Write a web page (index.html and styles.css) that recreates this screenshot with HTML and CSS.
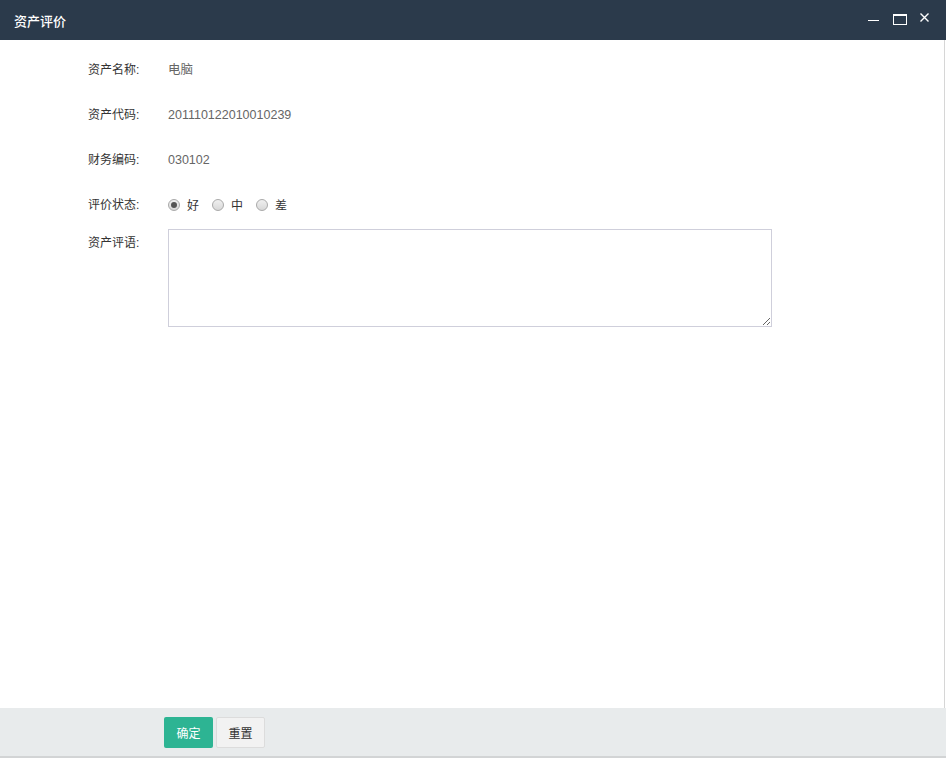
FILE: index.html
```html
<!DOCTYPE html>
<html lang="zh-CN">
<head>
    <meta charset="UTF-8">
    <title>资产评价</title>
    <link rel="stylesheet" href="styles.css">
</head>
<body>
    <div class="dialog">
        <div class="dialog-title">
            <span class="title-text">资产评价</span>
            <div class="title-tools">
                <span class="tool tool-min"></span>
                <span class="tool tool-max"></span>
                <span class="tool tool-close">
                    <svg width="9" height="9" viewBox="0 0 9 9"><path d="M0.5 0.5 L8.5 8.5 M8.5 0.5 L0.5 8.5" stroke="#fff" stroke-width="1.4" fill="none"/></svg>
                </span>
            </div>
        </div>

        <div class="dialog-body">
            <div class="form">
                <div class="row">
                    <span class="label">资产名称:</span>
                    <span class="value">电脑</span>
                </div>
                <div class="row">
                    <span class="label">资产代码:</span>
                    <span class="value">201110122010010239</span>
                </div>
                <div class="row">
                    <span class="label">财务编码:</span>
                    <span class="value">030102</span>
                </div>
                <div class="row">
                    <span class="label">评价状态:</span>
                    <div class="radios">
                        <label class="radio"><input type="radio" name="state" checked> 好</label>
                        <label class="radio"><input type="radio" name="state"> 中</label>
                        <label class="radio"><input type="radio" name="state"> 差</label>
                    </div>
                </div>
                <div class="row row-top">
                    <span class="label">资产评语:</span>
                    <textarea class="remark"></textarea>
                </div>
            </div>
        </div>

        <div class="dialog-footer">
            <button class="btn btn-ok">确定</button>
            <button class="btn btn-reset">重置</button>
        </div>
    </div>
</body>
</html>
```

FILE: styles.css
```css
* {
    box-sizing: border-box;
}

body {
    margin: 0;
    padding: 0;
    font-family: "Liberation Sans", "Noto Sans CJK SC", sans-serif;
    font-size: 12px;
    background-color: #ffffff;
}

.dialog {
    width: 946px;
    height: 758px;
    display: flex;
    flex-direction: column;
}

/* 标题栏 */
.dialog-title {
    height: 40px;
    background-color: #2b3a4b;
    display: flex;
    align-items: center;
    justify-content: space-between;
    padding: 0 17px 0 14px;
}

.title-text {
    color: #ffffff;
    font-size: 13px;
    font-weight: 500;
}

.title-tools {
    display: flex;
    align-items: flex-start;
    align-self: flex-start;
    padding-top: 13px;
}

.tool {
    display: block;
    height: 9px;
    position: relative;
}

.tool-min {
    width: 11px;
    margin-right: 14px;
}

.tool-min::after {
    content: "";
    position: absolute;
    left: 0;
    right: 0;
    top: 7px;
    height: 1px;
    background-color: #ffffff;
}

.tool-max {
    width: 12px;
    margin-right: 15px;
}

.tool-max::after {
    content: "";
    position: absolute;
    left: 0;
    top: 1px;
    width: 12px;
    height: 8px;
    border: 1px solid #ffffff;
    border-top-width: 2px;
}

.tool-close {
    width: 9px;
}

.tool-close svg {
    display: block;
}

/* 内容 */
.dialog-body {
    flex: 1;
    border-right: 1px solid #d6d6d6;
    margin-right: 1px;
}

.form {
    padding-top: 7px;
    padding-left: 88px;
}

.row {
    display: flex;
    align-items: center;
    height: 45px;
}

.row-top {
    align-items: flex-start;
    height: auto;
    margin-top: 2px;
}

.label {
    width: 80px;
    color: #333333;
    line-height: 20px;
}

.row-top .label {
    padding-top: 4px;
}

.value {
    color: #666666;
    font-size: 12.5px;
    line-height: 20px;
}

.radios {
    display: flex;
    align-items: center;
}

.radio {
    display: flex;
    align-items: center;
    color: #333333;
    margin-right: 13px;
}

.radio input {
    appearance: none;
    -webkit-appearance: none;
    width: 12px;
    height: 12px;
    margin: 0 7px 0 0;
    border: 1px solid #a9a9a9;
    border-radius: 50%;
    background: linear-gradient(#f0f0f0, #d8d8d8);
    position: relative;
}

.radio input:checked::after {
    content: "";
    position: absolute;
    left: 2px;
    top: 2px;
    width: 6px;
    height: 6px;
    border-radius: 50%;
    background-color: #555555;
}

.remark {
    width: 604px;
    height: 98px;
    border: 1px solid #cfcfdb;
    resize: both;
    font-family: inherit;
    padding: 6px;
}

/* 底部按钮 */
.dialog-footer {
    height: 50px;
    background-color: #e8ebec;
    border-bottom: 2px solid #d2d4d5;
    padding: 9px 0 0 164px;
    display: flex;
    gap: 3px;
}

.btn {
    width: 49px;
    height: 31px;
    font-family: inherit;
    font-size: 12px;
    border-radius: 2px;
    cursor: pointer;
}

.btn-ok {
    background-color: #2db493;
    color: #ffffff;
    border: none;
}

.btn-reset {
    background-color: #f2f2f2;
    color: #333333;
    border: 1px solid #dcdcdc;
}
```
